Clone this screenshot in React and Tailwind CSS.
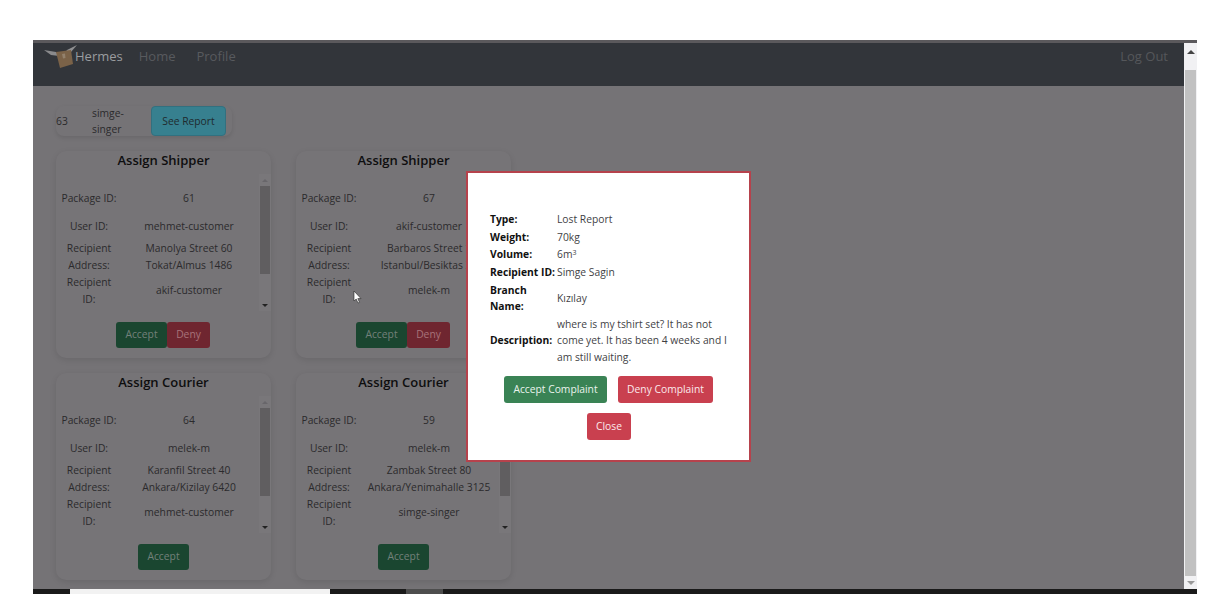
import React from "react";

const font = { fontFamily: '"Open Sans", "Noto Sans", sans-serif' };

const Logo = () => (
  <svg width="34" height="26" viewBox="0 0 34 26">
    <path d="M1 6 L13 8 L16 12 L8 11 Z" fill="#8a8a8c" />
    <path d="M34 1 L24 6 L21 11 L28 8 Z" fill="#8f8f91" />
    <path d="M13 8 L28 6 L30 20 L17 24 Z" fill="#7a6248" />
    <path d="M19 10 L22 9.5 L22.5 14 L20 14.5 Z" fill="#93816c" />
  </svg>
);

const ScrollBar = ({ thumb }) => (
  <div className="w-[12px] flex flex-col items-center bg-[#79777a]">
    <div className="h-[12px] flex items-center justify-center">
      <div className="w-0 h-0 border-x-[3px] border-x-transparent border-b-[3px] border-b-[#68666a]" />
    </div>
    <div className="w-[10px] bg-[#605e60]" style={{ height: thumb }} />
    <div className="flex-1" />
    <div className="h-[12px] flex items-center justify-center">
      <div className="w-0 h-0 border-x-[3px] border-x-transparent border-t-[3px] border-t-[#222]" />
    </div>
  </div>
);

const Row = ({ label, value, className }) => (
  <div className={`grid grid-cols-[66px_134px] items-center text-center ${className}`}>
    <div>{label}</div>
    <div className="whitespace-nowrap">{value}</div>
  </div>
);

const TaskCard = ({ title, packageId, userId, address, recipient, deny }) => (
  <div className="w-[215px] h-[207px] rounded-[10px] bg-[#767477] shadow-[0_2px_6px_rgba(0,0,0,0.1)] flex flex-col">
    <h3 className="text-[13px] font-semibold leading-[18px] text-[#0e0e0f] text-center">{title}</h3>
    <div className="flex h-[137px] mt-[5px] text-[10.3px] leading-[16.5px] text-[#2b2a2c]">
      <div className="flex-1 overflow-hidden">
        <Row className="h-[25px] mt-[12px]" label="Package ID:" value={packageId} />
        <Row className="h-[20px] mt-[5px]" label="User ID:" value={userId} />
        <Row
          className="h-[33px] mt-[4px]"
          label={<>Recipient<br />Address:</>}
          value={<>{address[0]}<br />{address[1]}</>}
        />
        <Row className="h-[33px] mt-[1px]" label={<>Recipient<br />ID:</>} value={recipient} />
      </div>
      <ScrollBar thumb={88} />
    </div>
    <div className={`flex justify-center mt-[11px] ${deny ? "pr-[1px]" : ""}`}>
      <button className="h-[26px] w-[51px] rounded-[3px] bg-[#1a4630] text-[10.3px] text-[#73807a]">Accept</button>
      {deny && <button className="h-[26px] w-[43px] rounded-[3px] bg-[#6f2630] text-[10.3px] text-[#a8737a]">Deny</button>}
    </div>
  </div>
);

const ModalRow = ({ label, children, className = "" }) => (
  <div className={`grid grid-cols-[67px_175px] items-center ${className}`}>
    <div className="font-bold text-[#111] whitespace-nowrap">{label}</div>
    <div className="text-[#3f3f45]">{children}</div>
  </div>
);

const Modal = () => (
  <div className="absolute left-[433px] top-[131px] w-[285px] h-[291px] bg-white border-[2px] border-[#b6424c] pt-[37px] pl-[22px] text-[10.3px] leading-[16.5px]">
    <ModalRow className="h-[18px]" label="Type:">Lost Report</ModalRow>
    <ModalRow className="h-[17.5px]" label="Weight:">70kg</ModalRow>
    <ModalRow className="h-[17.5px]" label="Volume:">
      <span>6m<sup className="text-[7px]">3</sup></span>
    </ModalRow>
    <ModalRow className="h-[17.5px]" label="Recipient ID:">Simge Sagin</ModalRow>
    <ModalRow className="mt-[1px]" label={<>Branch<br />Name:</>}>Kızılay</ModalRow>
    <ModalRow className="mt-[1px]" label="Description:">where is my tshirt set? It has not come yet. It has been 4 weeks and I am still waiting.</ModalRow>
    <div className="flex ml-[14px] gap-[11px] mt-[10.5px]">
      <button className="h-[27px] w-[103px] rounded-[3px] bg-[#3a8355] text-[#eaf3ed]">Accept Complaint</button>
      <button className="h-[27px] w-[95px] rounded-[3px] bg-[#c9404f] text-[#fbeaec]">Deny Complaint</button>
    </div>
    <button className="block h-[27px] w-[44px] rounded-[3px] bg-[#c9404f] text-[#fbeaec] mt-[10px] ml-[97px]">Close</button>
  </div>
);

export default function App() {
  return (
    <div style={font} className="h-[610px] w-[1226px] bg-white pt-[40px] pl-[33px] overflow-hidden">
      <div className="relative w-[1164px] h-[554px] flex flex-col overflow-hidden">
        <div className="h-[3px] bg-[#5b595c]" />
        <div className="flex-1 flex min-h-0">
          <div className="flex-1 flex flex-col min-w-0 bg-[#757376]">
            <nav className="h-[43px] bg-[#32353a] flex items-start pt-[1px] text-[13px] leading-[24px] pl-[10px] pr-[16px]">
              <Logo />
              <span className="ml-[-2px] text-[#9a9c9f]">Hermes</span>
              <span className="ml-[16px] text-[#585a5e]">Home</span>
              <span className="ml-[21px] text-[#585a5e]">Profile</span>
              <span className="ml-auto text-[#55575b]">Log Out</span>
            </nav>
            <div className="flex-1 pl-[23px] pt-[20px]">
              <div className="flex items-center w-[176px] h-[30px] rounded-[8px] shadow-[0_2px_4px_rgba(0,0,0,0.1)] text-[10.3px] leading-[16.5px] text-[#2b2a2c]">
                <span className="w-[36px]">63</span>
                <span className="w-[59px]">simge-<br />singer</span>
                <button className="h-[30px] w-[75px] rounded-[4px] bg-[#37808f] border border-[#32707f] text-[#1f2a2e]">See Report</button>
              </div>
              <div className="grid grid-cols-[215px_215px] gap-x-[25px] gap-y-[15px] mt-[15px]">
                <TaskCard title="Assign Shipper" packageId="61" userId="mehmet-customer" address={["Manolya Street 60", "Tokat/Almus 1486"]} recipient="akif-customer" deny />
                <TaskCard title="Assign Shipper" packageId="67" userId="akif-customer" address={["Barbaros Street 1", "Istanbul/Besiktas 34"]} recipient="melek-m" deny />
                <TaskCard title="Assign Courier" packageId="64" userId="melek-m" address={["Karanfil Street 40", "Ankara/Kizilay 6420"]} recipient="mehmet-customer" />
                <TaskCard title="Assign Courier" packageId="59" userId="melek-m" address={["Zambak Street 80", "Ankara/Yenimahalle 3125"]} recipient="simge-singer" />
              </div>
            </div>
          </div>
          <div className="w-[13px] bg-[#f1f1f3] flex flex-col items-center">
            <div className="h-[27px] pt-[7px]">
              <div className="w-0 h-0 border-x-[4px] border-x-transparent border-b-[4px] border-b-[#444]" />
            </div>
            <div className="w-[11px] flex-1 bg-[#c1c1c1]" />
            <div className="h-[13px] pt-[5px]">
              <div className="w-0 h-0 border-x-[4px] border-x-transparent border-t-[4px] border-t-[#999]" />
            </div>
          </div>
        </div>
        <div className="h-[5px] bg-[#1a1a1a] flex">
          <div className="ml-[37px] w-[260px] bg-[#f2f2f2]" />
          <div className="ml-[76px] w-[37px] bg-[#4d4d4d]" />
        </div>
        <Modal />
        <svg className="absolute left-[320px] top-[251px]" width="9" height="13" viewBox="0 0 9 13">
          <path d="M1 0 V10 L3.2 8 L5 12 L6.5 11.3 L4.8 7.6 H8 Z" fill="#fff" stroke="#222" strokeWidth="0.6" />
        </svg>
      </div>
    </div>
  );
}
